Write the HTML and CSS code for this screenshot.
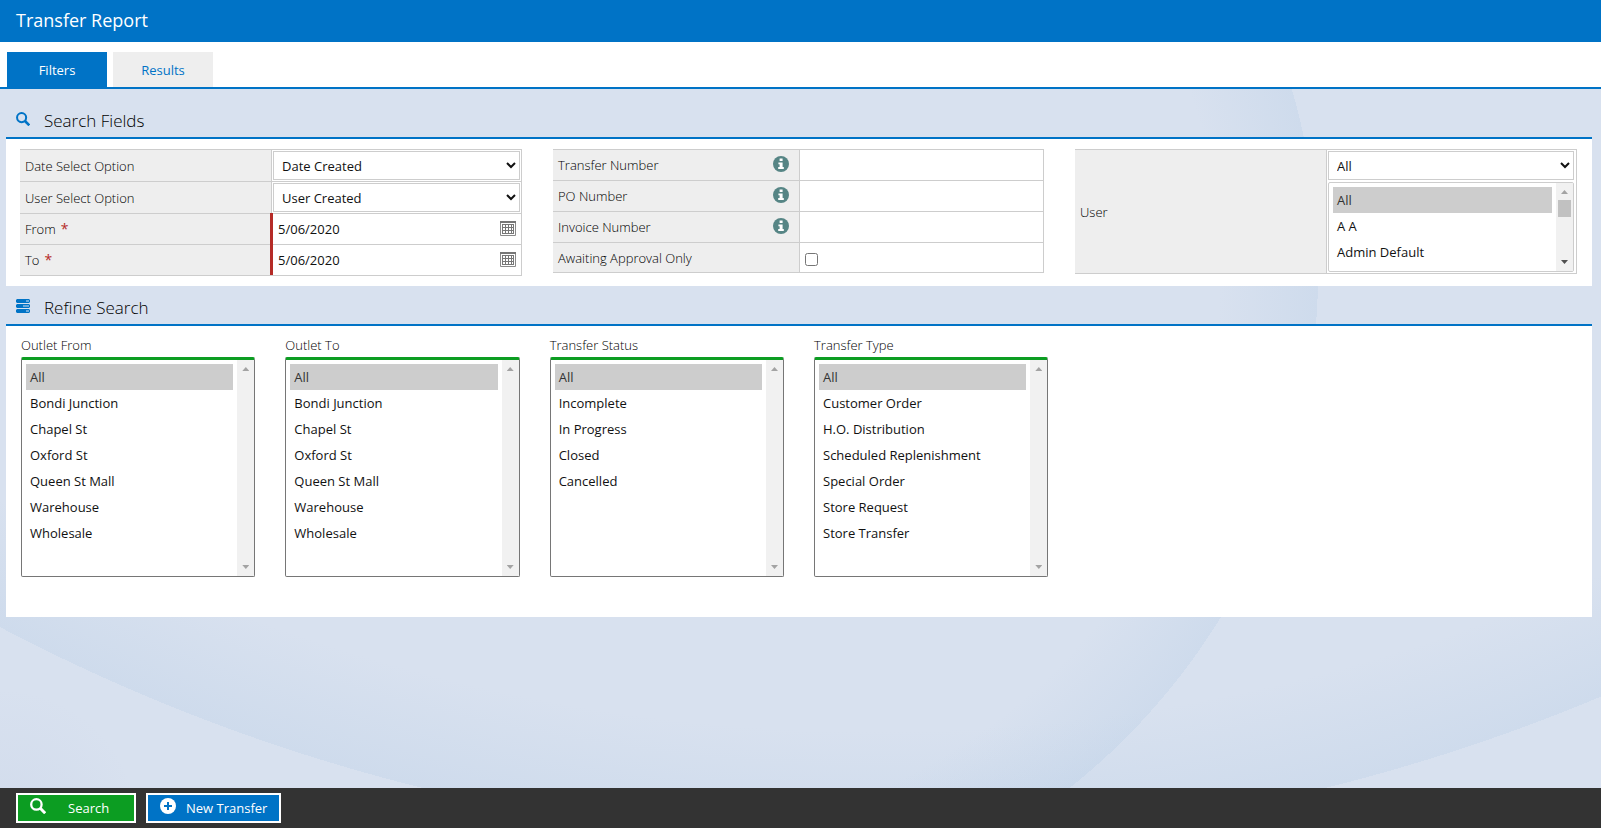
FILE: index.html
```html
<!DOCTYPE html>
<html lang="en">
<head>
  <meta charset="UTF-8">
  <meta name="viewport" content="width=device-width, initial-scale=1">
  <title>Transfer Report</title>
  <link rel="stylesheet" href="styles.css">
</head>
<body>
  <!-- shared icons -->
  <svg class="sprite" aria-hidden="true">
    <symbol id="icon-search" viewBox="0 0 16 16">
      <circle cx="6.4" cy="6.4" r="5.2" fill="none" stroke="currentColor" stroke-width="2.3"/>
      <path d="M10 10L15.2 15.2" stroke="currentColor" stroke-width="3"/>
    </symbol>
    <symbol id="icon-info" viewBox="0 0 16 16">
      <circle cx="8" cy="8" r="8" fill="#568585"/>
      <path d="M6.6 2.6h3v2.4h-3zM5.4 6.4h4.2v4.6h1.2v2H5.2v-2h1.4V8.2H5.4z" fill="#fff"/>
    </symbol>
    <symbol id="icon-calendar" viewBox="0 0 16 15">
      <path d="M.5 1.5h15v13H.5z" fill="#fff" stroke="#8a8a8a"/>
      <path d="M0 0h16v2H0z" fill="#777"/>
      <path d="M2 3h12v10H2z" fill="#777"/>
      <path d="M3 4h2v2H3zM6 4h2v2H6zM9 4h2v2H9zM12 4h1v2h-1zM3 7h2v2H3zM6 7h2v2H6zM9 7h2v2H9zM12 7h1v2h-1zM3 10h2v2H3zM6 10h2v2H6zM9 10h2v2H9zM12 10h1v2h-1z" fill="#fff"/>
    </symbol>
  </svg>

  <header class="page-header">
    <h1>Transfer Report</h1>
  </header>

  <nav class="tabs">
    <a class="tab active" href="#filters">Filters</a>
    <a class="tab" href="#results">Results</a>
  </nav>

  <main class="content" id="filters">
    <section>
      <div class="section-header">
        <svg class="section-icon"><use href="#icon-search"/></svg>
        <h2>Search Fields</h2>
      </div>
      <div class="panel search-panel">
        <div class="fields">
          <div class="field select-field">
            <label for="dateOption">Date Select Option</label>
            <div class="value"><select id="dateOption"><option>Date Created</option></select></div>
          </div>
          <div class="field select-field">
            <label for="userOption">User Select Option</label>
            <div class="value"><select id="userOption"><option>User Created</option></select></div>
          </div>
          <div class="field required">
            <label for="dateFrom">From <span class="star">*</span></label>
            <div class="value">
              <input type="text" id="dateFrom" value="5/06/2020">
              <button type="button" class="calendar" aria-label="Pick from date"><svg><use href="#icon-calendar"/></svg></button>
            </div>
          </div>
          <div class="field required">
            <label for="dateTo">To <span class="star">*</span></label>
            <div class="value">
              <input type="text" id="dateTo" value="5/06/2020">
              <button type="button" class="calendar" aria-label="Pick to date"><svg><use href="#icon-calendar"/></svg></button>
            </div>
          </div>
        </div>

        <div class="fields">
          <div class="field">
            <label for="transferNumber">Transfer Number <svg class="info"><use href="#icon-info"/></svg></label>
            <div class="value"><input type="text" id="transferNumber"></div>
          </div>
          <div class="field">
            <label for="poNumber">PO Number <svg class="info"><use href="#icon-info"/></svg></label>
            <div class="value"><input type="text" id="poNumber"></div>
          </div>
          <div class="field">
            <label for="invoiceNumber">Invoice Number <svg class="info"><use href="#icon-info"/></svg></label>
            <div class="value"><input type="text" id="invoiceNumber"></div>
          </div>
          <div class="field check-field">
            <label for="awaiting">Awaiting Approval Only</label>
            <div class="value"><input type="checkbox" id="awaiting"></div>
          </div>
        </div>

        <div class="fields">
          <div class="field user-field">
            <label for="userList">User</label>
            <div class="value">
              <select id="userGroup" aria-label="User group"><option>All</option></select>
              <div class="listbox scrolls">
                <select id="userList" multiple>
                  <option selected>All</option>
                  <option>A A</option>
                  <option>Admin Default</option>
                </select>
                <div class="scrollbar"><i class="thumb"></i></div>
              </div>
            </div>
          </div>
        </div>
      </div>
    </section>

    <section>
      <div class="section-header">
        <svg class="section-icon" viewBox="0 0 14 14">
          <path d="M1 0h12l1 1v2l-1 1H1L0 3V1zM1 5h12l1 1v2l-1 1H1L0 8V6zM1 10h12l1 1v2l-1 1H1l-1-1v-2z" fill="currentColor"/>
          <path d="M10 2h3M7 7h6M10 12h3" stroke="#d8e1ef"/>
        </svg>
        <h2>Refine Search</h2>
      </div>
      <div class="panel refine-panel">
        <div class="refine">
          <label for="outletFrom">Outlet From</label>
          <div class="listbox">
            <select id="outletFrom" multiple>
              <option selected>All</option>
              <option>Bondi Junction</option>
              <option>Chapel St</option>
              <option>Oxford St</option>
              <option>Queen St Mall</option>
              <option>Warehouse</option>
              <option>Wholesale</option>
            </select>
            <div class="scrollbar"></div>
          </div>
        </div>
        <div class="refine">
          <label for="outletTo">Outlet To</label>
          <div class="listbox">
            <select id="outletTo" multiple>
              <option selected>All</option>
              <option>Bondi Junction</option>
              <option>Chapel St</option>
              <option>Oxford St</option>
              <option>Queen St Mall</option>
              <option>Warehouse</option>
              <option>Wholesale</option>
            </select>
            <div class="scrollbar"></div>
          </div>
        </div>
        <div class="refine">
          <label for="transferStatus">Transfer Status</label>
          <div class="listbox">
            <select id="transferStatus" multiple>
              <option selected>All</option>
              <option>Incomplete</option>
              <option>In Progress</option>
              <option>Closed</option>
              <option>Cancelled</option>
            </select>
            <div class="scrollbar"></div>
          </div>
        </div>
        <div class="refine">
          <label for="transferType">Transfer Type</label>
          <div class="listbox">
            <select id="transferType" multiple>
              <option selected>All</option>
              <option>Customer Order</option>
              <option>H.O. Distribution</option>
              <option>Scheduled Replenishment</option>
              <option>Special Order</option>
              <option>Store Request</option>
              <option>Store Transfer</option>
            </select>
            <div class="scrollbar"></div>
          </div>
        </div>
      </div>
    </section>
  </main>

  <footer class="action-bar">
    <button type="button" class="btn btn-search">
      <svg><use href="#icon-search"/></svg>
      <span>Search</span>
    </button>
    <button type="button" class="btn btn-new">
      <svg viewBox="0 0 16 16">
        <circle cx="8" cy="8" r="8" fill="#fff"/>
        <path d="M8 4v8M4 8h8" stroke="#0073c6" stroke-width="2"/>
      </svg>
      <span>New Transfer</span>
    </button>
  </footer>
</body>
</html>
```
FILE: styles.css
```css
:root {
  --blue: #0073c6;
  --green: #0c9d22;
  --red: #b52b27;
  --line: #cdcdcd;
  --label-bg: #eee;
  --page-bg: #d8e1ef;
  --shade: rgba(150, 185, 220, 0.15);
  --arrow: #a3a3a3;
}

* {
  box-sizing: border-box;
}

body {
  margin: 0;
  min-height: 100vh;
  display: flex;
  flex-direction: column;
  font-family: "Open Sans", "Noto Sans", sans-serif;
  font-size: 13px;
  line-height: 18px;
  color: #111;
  /* large soft arcs behind the panels */
  background:
    radial-gradient(circle 658px at -40px 273px, transparent 85%, var(--shade) 100%, transparent 100%) 700px 0 / 901px 100% no-repeat,
    radial-gradient(circle 1877px at 874px -1034px, transparent 94%, var(--shade) 100%, transparent 100%) no-repeat,
    radial-gradient(circle 140px at 0 100%, rgba(150, 170, 210, 0.1), transparent) no-repeat,
    var(--page-bg);
}

h1,
h2 {
  margin: 0;
  font-weight: 400;
}

input,
select,
button {
  font: inherit;
  color: inherit;
}

.sprite {
  display: none;
}

.page-header {
  height: 42px;
  padding: 8px 16px;
  background: var(--blue);
  color: #fff;
}

.page-header h1 {
  font-size: 18px;
  line-height: 24px;
}

.tabs {
  display: flex;
  gap: 6px;
  padding: 10px 7px 0;
  background: #fff;
  border-bottom: 2px solid var(--blue);
}

.tab {
  width: 100px;
  height: 35px;
  line-height: 36px;
  text-align: center;
  text-decoration: none;
  color: var(--blue);
  background: var(--label-bg);
}

.tab.active {
  color: #fff;
  background: var(--blue);
}

.content {
  flex: 1;
  padding: 10px 9px 0 6px;
}

.section-header {
  height: 38px;
  display: flex;
  align-items: center;
  gap: 14px;
  padding: 6px 10px 0;
}

.section-header h2 {
  font-size: 17px;
  font-weight: 300;
  line-height: 24px;
  color: #000;
}

.section-icon {
  width: 14px;
  height: 14px;
  margin-bottom: 4px;
  color: var(--blue);
}

.panel {
  background: #fff;
  border-top: 2px solid var(--blue);
}

.search-panel {
  display: grid;
  grid-template-columns: 502fr 491fr 502fr;
  align-items: start;
  gap: 31px;
  padding: 10px 15px 10px 14px;
}

.fields {
  border-top: 1px solid var(--line);
}

.field {
  display: grid;
  grid-template-columns: 1fr 1fr;
  height: 31px;
  border-bottom: 1px solid var(--line);
}

.select-field {
  height: 32px;
}

.check-field {
  height: 30px;
}

.user-field {
  height: 124px;
}

label {
  font-weight: 300;
  color: #000;
}

.field label {
  display: flex;
  align-items: center;
  padding: 0 10px 0 5px;
  background: var(--label-bg);
}

.star {
  margin-left: 5px;
  font-size: 14px;
  font-weight: 400;
  color: var(--red);
}

.info {
  width: 16px;
  height: 16px;
  margin: 0 0 2px auto;
}

.value {
  display: flex;
  align-items: center;
  min-width: 0;
  border: solid var(--line);
  border-width: 0 1px;
}

/* the red bar covers the row line above it */
.required .value {
  margin: -1px 0 0 -1px;
  border-left: 3px solid var(--red);
  padding-right: 5px;
  background: linear-gradient(var(--line) 1px, transparent 1px);
}

.value input[type="text"] {
  flex: 1;
  min-width: 0;
  height: 28px;
  padding: 0 5px;
  border: 0;
  outline: 0;
  background: none;
}

.value input[type="checkbox"] {
  width: 13px;
  height: 13px;
  margin: 4px 5px 0;
}

.calendar {
  width: 16px;
  height: 15px;
  padding: 0;
  border: 0;
  background: none;
}

.calendar svg {
  display: block;
  width: 16px;
  height: 15px;
}

.value > select {
  width: calc(100% - 2px);
  height: 29px;
  margin-left: 1px;
  padding: 0 4px;
  background: #fff;
  border: 1px solid var(--line);
  border-radius: 0;
}

.user-field .value {
  flex-direction: column;
  align-items: flex-start;
  gap: 2px;
  padding: 1px 1px 1px 0;
}

/* list boxes */
.listbox {
  display: flex;
  height: 220px;
  overflow: hidden;
  background: #fff;
  border: 1px solid #767676;
  border-top: 3px solid var(--green);
  border-radius: 2px;
}

.value .listbox {
  width: calc(100% - 2px);
  height: 90px;
  margin-left: 1px;
  border: 1px solid var(--line);
}

.listbox select {
  flex: 1;
  min-width: 0;
  height: 100%;
  padding: 4px;
  background: none;
  border: 0;
  outline: 0;
}

.listbox option {
  height: 26px;
  min-height: 26px;
  padding: 4px;
  line-height: 18px;
}

.listbox option:checked {
  color: #333;
  background: #cdcdcd;
}

.scrollbar {
  display: flex;
  flex-direction: column;
  align-items: center;
  width: 17px;
  padding: 7px 0;
  background: #f1f1f1;
}

.scrollbar::before,
.scrollbar::after {
  content: '';
  width: 7px;
  height: 4px;
  background: var(--arrow);
  clip-path: polygon(50% 0, 100% 100%, 0 100%);
}

.scrollbar::after {
  margin-top: auto;
  clip-path: polygon(0 0, 100% 0, 50% 100%);
}

.scrolls .scrollbar::after {
  background: #505050;
}

.thumb {
  width: 13px;
  height: 17px;
  margin-top: 6px;
  background: #c1c1c1;
}

.refine-panel {
  display: grid;
  grid-template-columns: repeat(6, 1fr);
  padding: 10px 0 40px;
}

.refine {
  padding: 0 15px;
}

.refine label {
  display: block;
  height: 21px;
}

.action-bar {
  display: flex;
  gap: 10px;
  padding: 5px 16px;
  background: #333;
}

.btn {
  display: flex;
  align-items: center;
  height: 30px;
  padding: 0 12px;
  border: 2px solid #fff;
  color: #fff;
}

.btn svg {
  width: 16px;
  height: 16px;
  margin-bottom: 4px;
}

.btn-search {
  gap: 22px;
  width: 120px;
  background: var(--green);
}

.btn-new {
  gap: 10px;
  background: var(--blue);
}
```
